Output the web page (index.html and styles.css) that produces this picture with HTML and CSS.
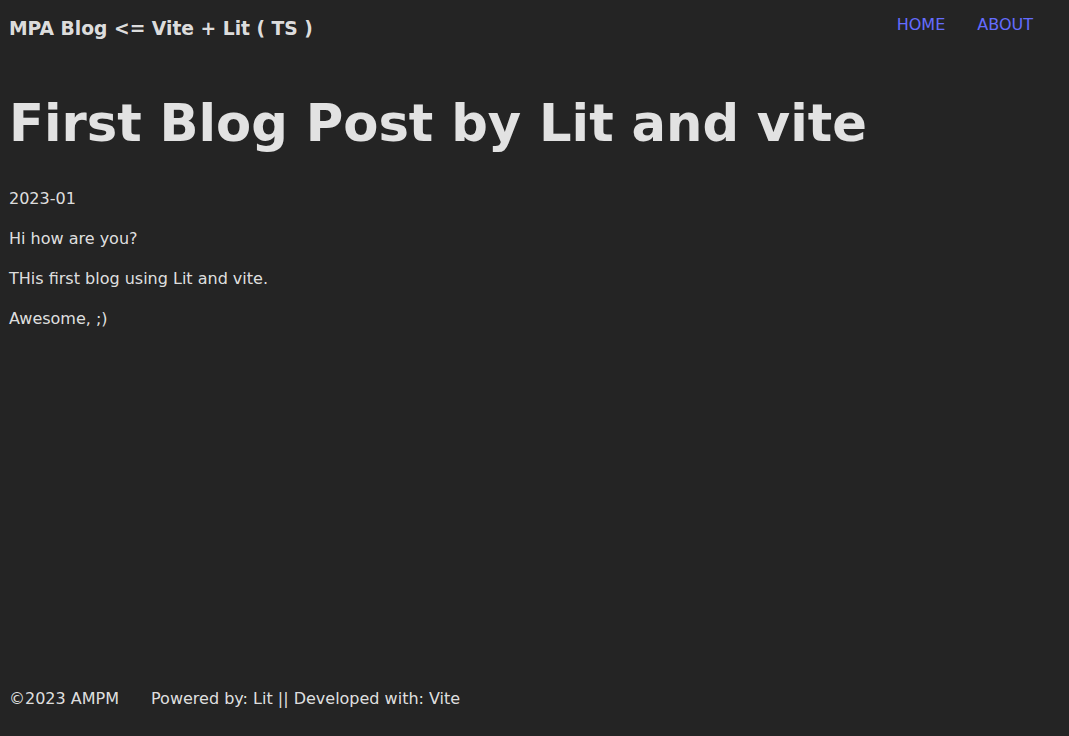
FILE: index.html
```html
<!DOCTYPE html>
<html lang="en">
<head>
<meta charset="utf-8">
<title>MPA Blog</title>
<link rel="stylesheet" href="styles.css">
</head>
<body>
<div class="page">
  <header class="site-header">
    <div class="site-title">MPA Blog &lt;= Vite + Lit ( TS )</div>
    <nav class="site-nav">
      <a href="#">HOME</a>
      <a href="#">ABOUT</a>
    </nav>
  </header>
  <main class="post">
    <h1 class="post-title">First Blog Post by Lit and vite</h1>
    <p>2023-01</p>
    <p>Hi how are you?</p>
    <p>THis first blog using Lit and vite.</p>
    <p>Awesome, ;)</p>
  </main>
  <footer class="site-footer">
    <span>©2023 AMPM</span>
    <span>Powered by: Lit || Developed with: Vite</span>
  </footer>
</div>
</body>
</html>
```

FILE: styles.css
```css
html, body {
  margin: 0;
  padding: 0;
  background: #242424;
}
body {
  font-family: "DejaVu Sans", sans-serif;
  font-size: 16px;
  line-height: 1.5;
  color: rgba(255, 255, 255, 0.87);
}
.page {
  min-height: 100vh;
  box-sizing: border-box;
  display: flex;
  flex-direction: column;
  padding: 0 9px;
}
.site-header {
  display: flex;
  justify-content: space-between;
  align-items: flex-start;
  padding-top: 13px;
}
.site-title {
  font-size: 18.72px;
  font-weight: bold;
  line-height: 28px;
  margin-top: 2px;
}
.site-nav {
  display: flex;
  gap: 32px;
  padding-right: 27px;
}
.site-nav a {
  color: #646cff;
  text-decoration: none;
  line-height: 24px;
}
.post {
  flex: 1;
}
.post-title {
  font-size: 3.2em;
  line-height: 1.1;
  margin: 52px 0 36px;
}
.post p {
  margin: 16px 0;
}
.site-footer {
  display: flex;
  gap: 32px;
  padding-bottom: 25px;
}
```
